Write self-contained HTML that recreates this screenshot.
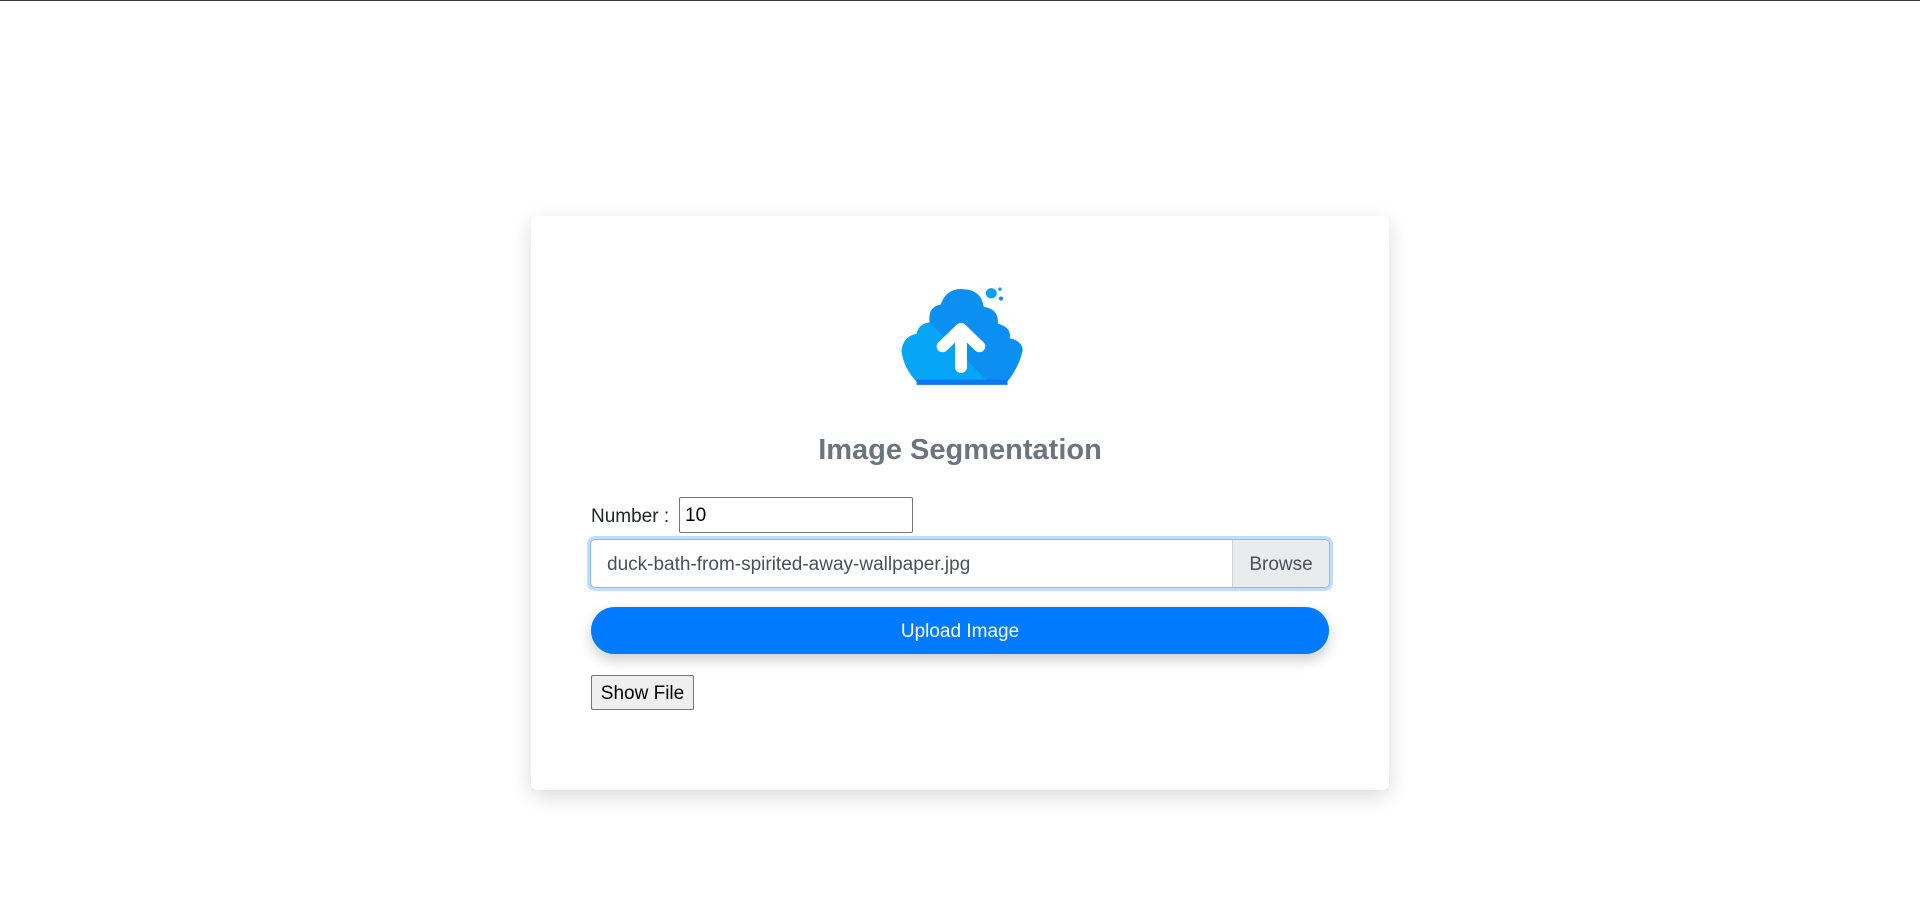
<!DOCTYPE html>
<html><head><meta charset="utf-8"><style>
html,body{margin:0;padding:0;background:#fff;width:1920px;height:897px;overflow:hidden;font-family:"Liberation Sans",sans-serif;}
.top{position:absolute;left:0;top:0;width:1920px;height:1px;background:#3a3a4a;}
.card{position:absolute;left:531px;top:216px;width:858px;height:574px;background:#fff;border-radius:6px;box-shadow:0 6px 20px rgba(0,0,0,.15);}
.icon{position:absolute;left:895px;top:284px;}
.title{position:absolute;left:531px;width:858px;top:434px;text-align:center;font-size:29px;font-weight:bold;color:#6c757d;}
.lbl{position:absolute;left:591px;top:506px;font-size:19px;color:#212529;}
.num{position:absolute;left:679px;top:497px;width:234px;height:36px;border:1px solid #767676;border-radius:2px;box-sizing:border-box;font-size:19px;padding:7px 5px;color:#000;line-height:22px;}
.file{position:absolute;left:590px;top:539px;width:740px;height:49px;box-sizing:border-box;border:1px solid #80bdff;border-radius:5px;box-shadow:0 0 0 3px rgba(0,123,255,.25);background:#fff;overflow:hidden;}
.file .t{position:absolute;left:16px;top:14px;font-size:19px;color:#495057;}
.file .b{position:absolute;right:0;top:0;width:96px;height:47px;background:#e9ecef;border-left:1px solid #ced4da;font-size:19px;color:#495057;line-height:49px;text-align:center;}
.up{position:absolute;left:591px;top:607px;width:738px;height:47px;background:#007bff;border-radius:24px;color:#fff;font-size:19px;text-align:center;line-height:50px;box-shadow:0 6px 14px rgba(0,0,0,.2);}
.show{position:absolute;left:591px;top:675px;width:103px;height:35px;box-sizing:border-box;background:#efefef;border:1px solid #767676;border-radius:2px;font-size:19px;color:#000;text-align:center;line-height:36px;}
</style></head><body>
<div class="top"></div>
<div class="card"></div>
<svg class="icon" width="132" height="104" viewBox="0 0 122 100" preserveAspectRatio="none">
<circle cx="89" cy="9" r="5" fill="#0aa0f5"/><circle cx="97" cy="5" r="1.6" fill="#0aa0f5"/><circle cx="98" cy="14" r="2" fill="#0a8cf0"/>
<path d="M6 64 Q8 50 20 48 Q22 38 32 37 Q30 22 42 20 Q48 3 64 5 Q80 6 82 22 Q96 24 95 38 Q108 42 106 52 Q118 55 118 64 Q114 82 102 96 L22 96 Q8 82 6 64Z" fill="#0b8ff0"/>
<path d="M6 64 Q8 50 20 48 Q22 38 32 37 L88 96 L22 96 Q8 82 6 64Z" fill="#06a5f7"/>
<rect x="20" y="92" width="84" height="5" fill="#0a78f0"/>
<path d="M61 43 L44 60 M61 43 L78 60 M61 43 L61 80" stroke="#fff" stroke-width="11" stroke-linecap="round" stroke-linejoin="round" fill="none"/>
</svg>
<div class="title">Image Segmentation</div>
<div class="lbl">Number :</div>
<div class="num">10</div>
<div class="file"><span class="t">duck-bath-from-spirited-away-wallpaper.jpg</span><div class="b">Browse</div></div>
<div class="up">Upload Image</div>
<div class="show">Show File</div>
</body></html>
